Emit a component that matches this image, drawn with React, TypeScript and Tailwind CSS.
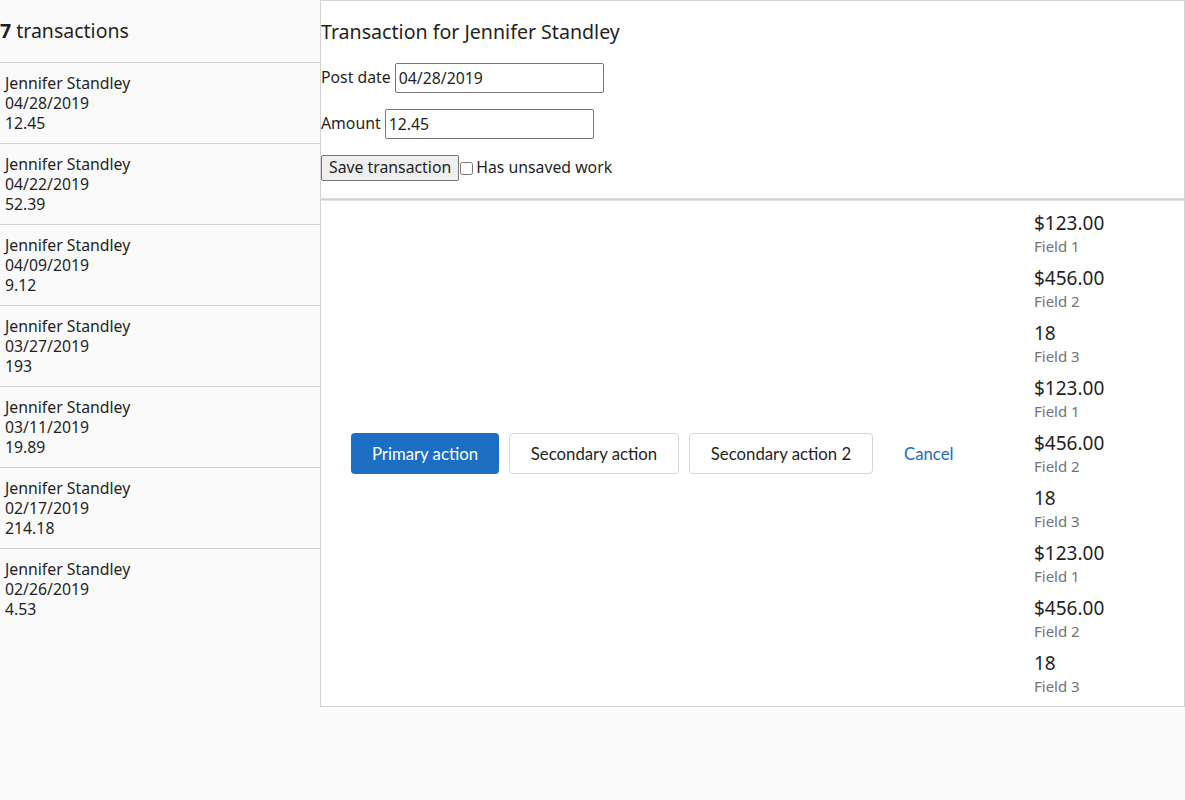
import React from 'react';

const transactions = [
  { name: 'Jennifer Standley', date: '04/28/2019', amount: '12.45' },
  { name: 'Jennifer Standley', date: '04/22/2019', amount: '52.39' },
  { name: 'Jennifer Standley', date: '04/09/2019', amount: '9.12' },
  { name: 'Jennifer Standley', date: '03/27/2019', amount: '193' },
  { name: 'Jennifer Standley', date: '03/11/2019', amount: '19.89' },
  { name: 'Jennifer Standley', date: '02/17/2019', amount: '214.18' },
  { name: 'Jennifer Standley', date: '02/26/2019', amount: '4.53' }
];

const fields = [
  { value: '$123.00', label: 'Field 1' },
  { value: '$456.00', label: 'Field 2' },
  { value: '18', label: 'Field 3' },
  { value: '$123.00', label: 'Field 1' },
  { value: '$456.00', label: 'Field 2' },
  { value: '18', label: 'Field 3' },
  { value: '$123.00', label: 'Field 1' },
  { value: '$456.00', label: 'Field 2' },
  { value: '18', label: 'Field 3' }
];

export default function App() {
  return (
    <main className="min-h-[800px] bg-[#fafafa] text-[#1f1f1f] font-['Noto_Sans',sans-serif] flex items-start">
      {/* transaction list */}
      <aside className="w-[320px] shrink-0">
        <h2 className="h-[63px] flex items-center text-[19.5px] border-b border-[#d0d0d0]">
          <span className="font-bold">7</span>&nbsp;transactions
        </h2>
        <ul>
          {transactions.map((t, i) => (
            <li
              key={i}
              className={`h-[81px] px-[5px] pt-[10px] text-[15.8px] leading-[20px] ${i < transactions.length - 1 ? 'border-b border-[#d0d0d0]' : ''}`}
            >
              <div>{t.name}</div>
              <div>{t.date}</div>
              <div>{t.amount}</div>
            </li>
          ))}
        </ul>
      </aside>

      {/* detail pane */}
      <section className="flex-1 bg-white border border-[#d4d4d4] flex flex-col">
        <div className="h-[197px] pt-[18px] text-[15.8px]">
          <h3 className="text-[19.6px] leading-[26px] mb-[18px]">Transaction for Jennifer Standley</h3>
          <label className="flex items-center h-[30px] mb-[16px]">
            Post date&nbsp;
            <input
              defaultValue="04/28/2019"
              className="w-[209px] h-[30px] border border-[#767676] rounded-[2px] px-[3px] text-[15.8px] outline-none"
            />
          </label>
          <label className="flex items-center h-[30px] mb-[16px]">
            Amount&nbsp;
            <input
              defaultValue="12.45"
              className="w-[209px] h-[30px] border border-[#767676] rounded-[2px] px-[3px] text-[15.8px] outline-none"
            />
          </label>
          <div className="flex items-center">
            <button className="h-[26px] px-[7px] bg-[#efefef] border border-[#767676] rounded-[2px] text-[15.8px] leading-none">
              Save transaction
            </button>
            <input type="checkbox" className="w-[13px] h-[13px] mx-[1px]" />
            <span className="ml-[2px]">Has unsaved work</span>
          </div>
        </div>
        <div className="h-[3px] bg-gradient-to-b from-[#e2e2e2] via-[#d0d0d0] to-[#eeeeee]" />

        <div className="flex">
          <div className="flex-1 flex items-center pl-[30px] gap-[10px] font-['Lato',sans-serif] text-[16.75px]">
            <button className="h-[41px] w-[148px] rounded-[4px] bg-[#1b6ec2] text-white">Primary action</button>
            <button className="h-[41px] w-[170px] rounded-[4px] border border-[#d6d6d6] bg-white">Secondary action</button>
            <button className="h-[41px] w-[184px] rounded-[4px] border border-[#d6d6d6] bg-white">Secondary action 2</button>
            <button className="h-[41px] px-[21px] text-[#1b6ec2]">Cancel</button>
          </div>
          <div className="w-[150px] pt-[10px]">
            {fields.map((f, i) => (
              <div key={i} className="h-[55px]">
                <div className="text-[19px] leading-[25px]">{f.value}</div>
                <div className="text-[15px] leading-[20px] text-[#737373]">{f.label}</div>
              </div>
            ))}
          </div>
        </div>
      </section>
    </main>
  );
}
